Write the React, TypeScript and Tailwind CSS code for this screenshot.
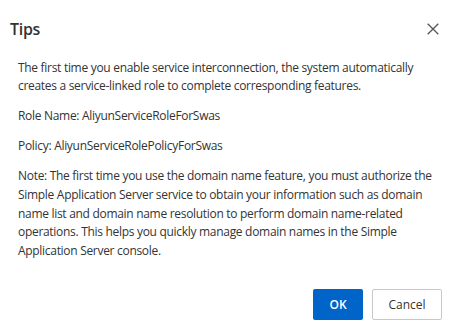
export default function App() {
  return (
    <div className="w-[460px] h-[331px] bg-white flex flex-col text-[#333] font-['Open_Sans',sans-serif]">
      {/* Header */}
      <div className="flex items-center justify-between pl-[10px] pr-[21px] pt-[12px] h-[46px]">
        <h2 className="text-[16px] font-semibold leading-[22px] tracking-[-0.3px]">Tips</h2>
        <button className="text-[#555] cursor-pointer">
          <svg width="12" height="12" viewBox="0 0 12 12" fill="none" stroke="currentColor" strokeWidth={1.3}>
            <path d="M0.7 0.7L11.3 11.3M11.3 0.7L0.7 11.3" />
          </svg>
        </button>
      </div>

      {/* Body */}
      <div className="px-[18px] pt-[12.5px] text-[12px] leading-[18.6px] tracking-[-0.3px] flex flex-col gap-[11.5px]">
        <p>
          The first time you enable service interconnection, the system automatically creates a service-linked role to
          complete corresponding features.
        </p>
        <p>Role Name: AliyunServiceRoleForSwas</p>
        <p>Policy: AliyunServiceRolePolicyForSwas</p>
        <p>
          Note: The first time you use the domain name feature, you must authorize the Simple Application Server service
          to obtain your information such as domain name list and domain name resolution to perform domain name-related
          operations. This helps you quickly manage domain names in the Simple Application Server console.
        </p>
      </div>

      {/* Footer */}
      <div className="mt-auto flex justify-end gap-[9px] pr-[18px] pb-[11px]">
        <button className="h-[31px] w-[50px] rounded-[2px] bg-[#0064c8] text-white text-[12px] font-semibold">
          OK
        </button>
        <button className="h-[31px] w-[70px] rounded-[2px] border border-[#c8c8c8] bg-white text-[#333] text-[12px]">
          Cancel
        </button>
      </div>
    </div>
  );
}
